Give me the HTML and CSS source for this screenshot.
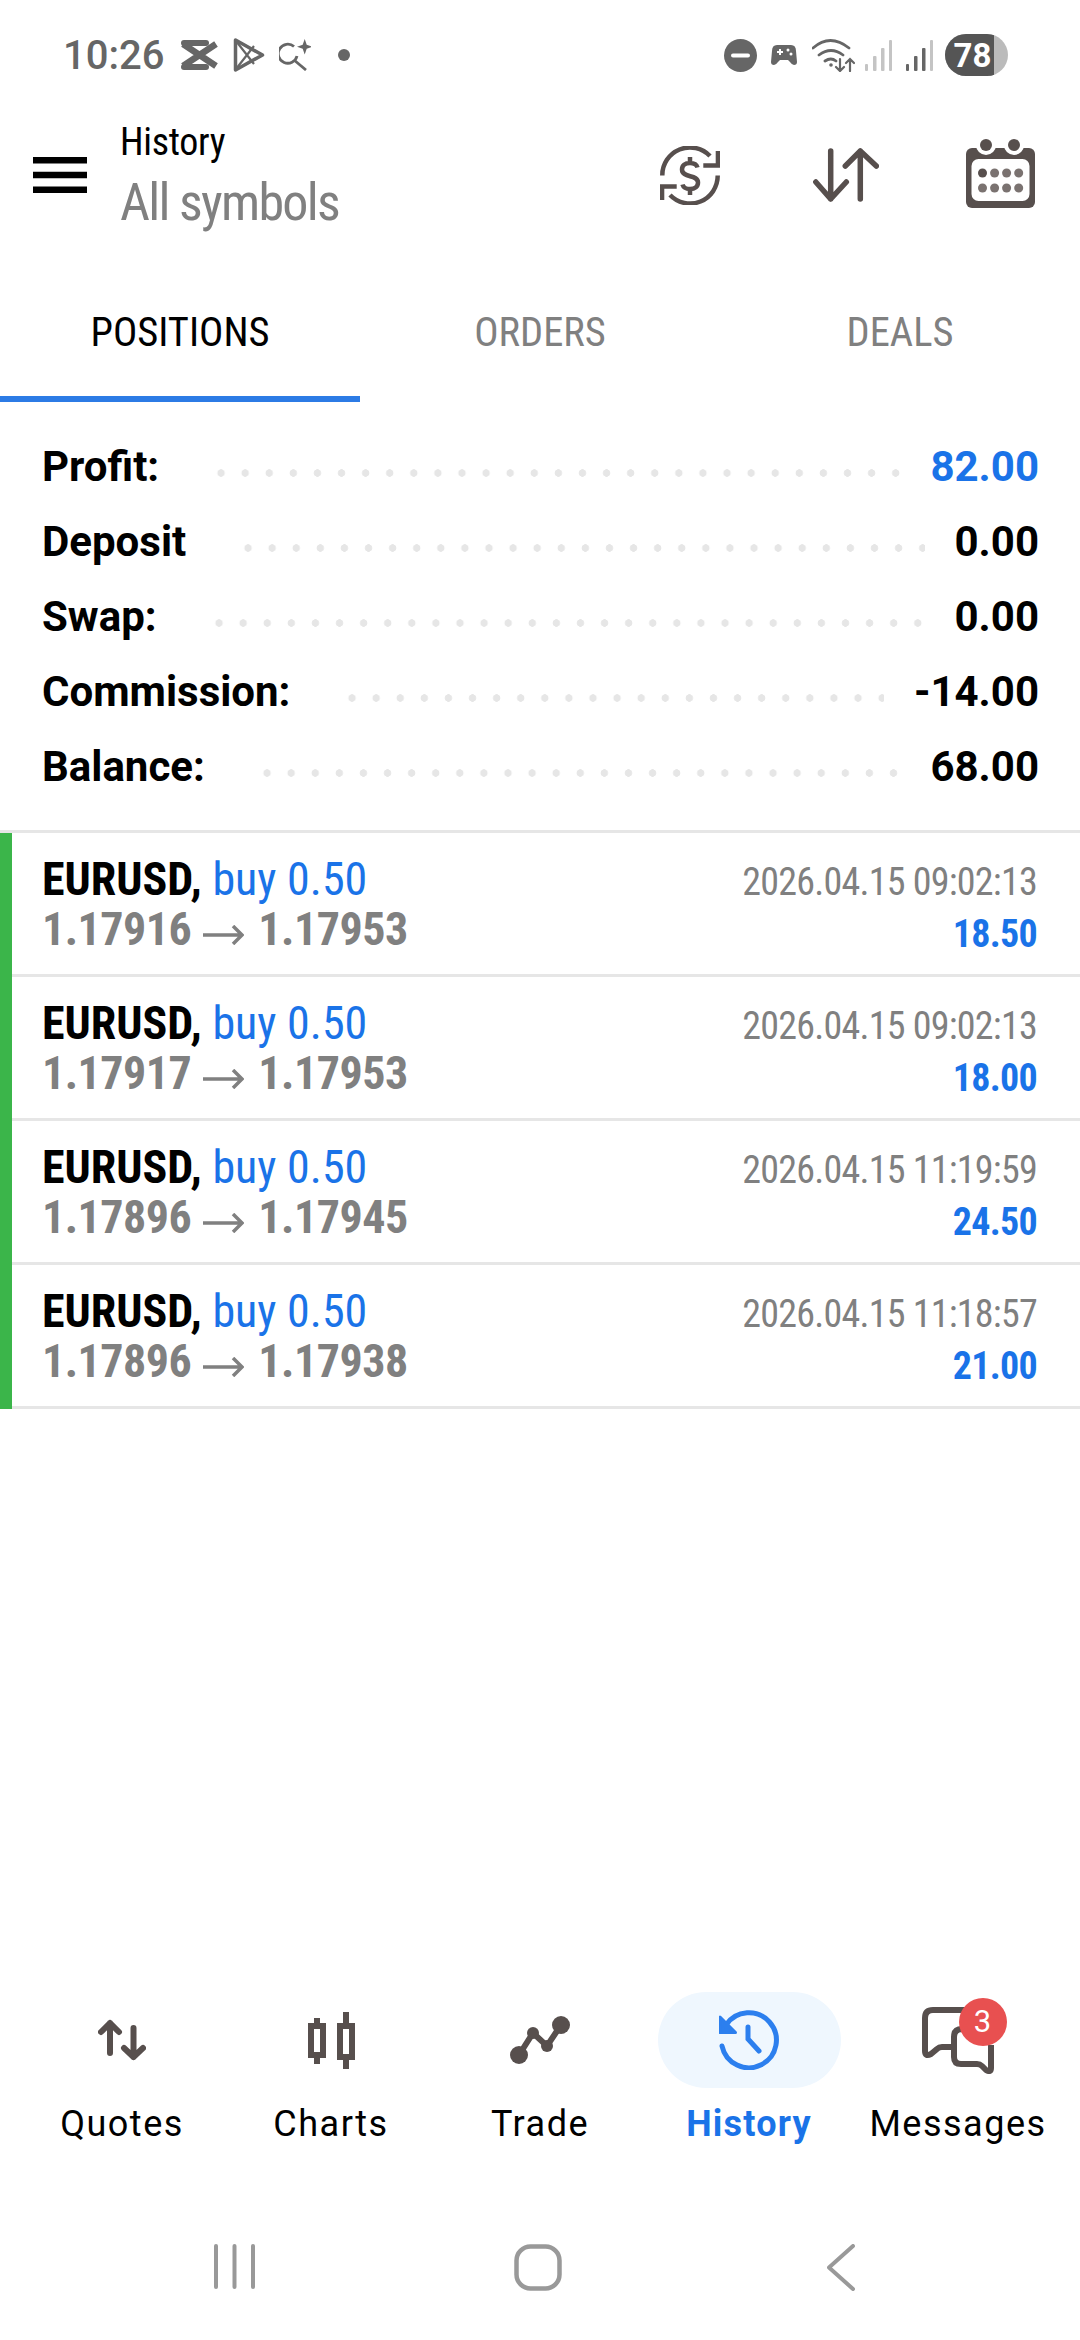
FILE: index.html
```html
<!DOCTYPE html>
<html lang="en">
<head>
    <meta charset="UTF-8">
    <meta name="viewport" content="width=device-width, initial-scale=1.0">
    <title>History</title>
    <link rel="stylesheet" href="styles.css">
</head>
<body>
    <div class="status">
        <span class="clock">10:26</span>
        <svg width="37" height="30" viewBox="0 0 37 30"><rect width="28" height="6" rx="3" fill="#666"/><rect y="24" width="28" height="6" rx="3" fill="#666"/><path d="M2 4L35 26M35 4L2 26" stroke="#666" stroke-width="6.5" fill="none"/></svg>
        <svg class="st-play" width="32" height="36" viewBox="0 0 32 36" fill="none" stroke="#666" stroke-width="3.5" stroke-linejoin="round"><path d="M2.5 3v30l27-15z"/><path d="M3 4l18 23M3 32L21 9" stroke-width="2.2"/></svg>
        <svg class="st-search" width="32" height="32" viewBox="0 0 32 32" fill="none" stroke="#666" stroke-width="2.8"><path d="M15 7.5A9.5 9.5 0 1 0 18 17"/><path d="M15 21l12 10"/><path d="M25.7 0l2 5.7 5.7 2-5.7 2-2 5.700-2-5.700-5.700-2 5.700-2z" fill="#666" stroke="none"/></svg>
        <span class="st-dot"></span>
        <span class="status-gap"></span>
        <svg width="33" height="33" viewBox="0 0 33 33"><circle cx="16.5" cy="16.5" r="16.5" fill="#666"/><rect x="7" y="14.5" width="19" height="4" rx="2" fill="#fff"/></svg>
        <svg class="st-pad" width="26" height="22" viewBox="0 0 26 22"><path d="M6 1h14q5 0 5 6l1 11q0 3-3 3-2 0-4-3l-2-2H9l-2 2q-2 3-4 3-3 0-3-3L1 7q0-6 5-6z" fill="#666"/><path d="M6 8h6M9 5v6" stroke="#fff" stroke-width="2"/><circle cx="17" cy="6" r="1.5" fill="#fff"/><circle cx="20" cy="10" r="1.5" fill="#fff"/></svg>
        <svg class="st-wifi" width="43" height="33" viewBox="0 0 43 33" fill="none" stroke="#666" stroke-width="2.8" stroke-linecap="round"><path d="M1 9q17-15 36 0M7 16q12-9 24 0M13 22q6-4 11 0"/><circle cx="19" cy="26" r="1.8" fill="#666" stroke="none"/><path d="M28 20v12M24 28l4 4 4-4M38 32V20M34 24l4-4 4 4" stroke-width="2.2"/></svg>
        <svg class="st-signal" width="27" height="31" viewBox="0 0 27 31" fill="#c4c4c4"><rect x="0" y="24" width="3" height="7" rx="1"/><rect x="8" y="16" width="3.5" height="15" rx="1"/><rect x="16" y="8" width="3.5" height="23" rx="1"/><rect x="24" y="0" width="3" height="31" rx="1"/></svg>
        <svg class="st-signal2" width="27" height="31" viewBox="0 0 27 31" fill="#666"><rect x="0" y="24" width="3" height="7" rx="1"/><rect x="8" y="16" width="3.5" height="15" rx="1"/><rect x="16" y="8" width="3.5" height="23" rx="1"/><rect x="24" y="0" width="3" height="31" rx="1" fill="#c4c4c4"/></svg>
        <span class="battery"><span class="battery-fill">78</span></span>
    </div>

    <header class="topbar">
        <svg class="menu" width="54" height="36" viewBox="0 0 54 36"><path d="M0 0h54v6.5H0zM0 14.75h54v6.5H0zM0 29.5h54V36H0z" fill="#000"/></svg>
        <div class="titles">
            <div class="title">History</div>
            <div class="subtitle">All symbols</div>
        </div>
        <div class="actions">
            <svg width="60" height="59" viewBox="0 0 60 59" fill="none" stroke="#574f4d" stroke-width="4.5"><path d="M2.3 29.5A27.7 27.7 0 0 1 50 10M57.7 29.5A27.7 27.7 0 0 1 10 49"/><path d="M60 5v16.7H43.3v-4.400h12.400V5zM0 54V38.300h16.700v4.400H4.300V54z" fill="#574f4d" stroke="none"/><path d="M37.5 21.5C36.5 18 33.5 17 30 17c-5 0-8 2.5-8 6.5 0 9 16 4.500 16 13 0 4-3 6.500-8 6.500-3.500 0-6.500-1-7.500-4.500M30 11v6M30 43v6"/></svg>
            <svg class="act-sort" width="66" height="54" viewBox="0 0 66 54" fill="none" stroke="#574f4d" stroke-width="5.5" stroke-linecap="round" stroke-linejoin="round"><path d="M17.7 3v48M2.800 34l14.900 17 15.600-17M47.300 51V3M32.300 18L47.300 3l16 15"/></svg>
            <svg class="act-cal" width="69" height="69" viewBox="0 0 69 69"><rect y="9" width="69" height="60" rx="6" fill="#574f4d"/><g fill="#fff"><circle cx="20" cy="6" r="10"/><circle cx="48" cy="6" r="10"/></g><g fill="#574f4d"><circle cx="20" cy="6" r="6"/><circle cx="48" cy="6" r="6"/></g><rect x="5.5" y="20" width="58" height="42" rx="7" fill="#fff"/><g fill="#7a7270"><circle cx="16.5" cy="34" r="4.5" fill="#574f4d"/><circle cx="28.6" cy="34" r="4.5"/><circle cx="40.6" cy="34" r="4.5"/><circle cx="52.7" cy="34" r="4.5"/><circle cx="16.5" cy="49" r="4.5"/><circle cx="28.6" cy="49" r="4.5"/><circle cx="40.6" cy="49" r="4.5"/><circle cx="52.7" cy="49" r="4.5"/></g></svg>
        </div>
    </header>

    <nav class="tabs">
        <div class="tab active">POSITIONS</div>
        <div class="tab">ORDERS</div>
        <div class="tab">DEALS</div>
    </nav>

    <section class="summary">
        <div class="sum-row"><span>Profit:</span><i class="dots"></i><span class="blue">82.00</span></div>
        <div class="sum-row"><span>Deposit</span><i class="dots"></i><span>0.00</span></div>
        <div class="sum-row"><span>Swap:</span><i class="dots"></i><span>0.00</span></div>
        <div class="sum-row"><span>Commission:</span><i class="dots"></i><span>-14.00</span></div>
        <div class="sum-row"><span>Balance:</span><i class="dots"></i><span>68.00</span></div>
    </section>

    <section class="deals">
        <div class="deal">
            <div class="deal-left">
                <div class="deal-name"><b>EURUSD,</b> <span class="blue">buy 0.50</span></div>
                <div class="deal-price">1.17916<svg class="arrow" width="41" height="20" viewBox="0 0 41 20" fill="none" stroke="#808080" stroke-width="3.5"><path d="M0 10h39M30 1l9 9-9 9"/></svg>1.17953</div>
            </div>
            <div class="deal-right">
                <div class="deal-time">2026.04.15 09:02:13</div>
                <div class="deal-profit blue">18.50</div>
            </div>
        </div>
        <div class="deal">
            <div class="deal-left">
                <div class="deal-name"><b>EURUSD,</b> <span class="blue">buy 0.50</span></div>
                <div class="deal-price">1.17917<svg class="arrow" width="41" height="20" viewBox="0 0 41 20" fill="none" stroke="#808080" stroke-width="3.5"><path d="M0 10h39M30 1l9 9-9 9"/></svg>1.17953</div>
            </div>
            <div class="deal-right">
                <div class="deal-time">2026.04.15 09:02:13</div>
                <div class="deal-profit blue">18.00</div>
            </div>
        </div>
        <div class="deal">
            <div class="deal-left">
                <div class="deal-name"><b>EURUSD,</b> <span class="blue">buy 0.50</span></div>
                <div class="deal-price">1.17896<svg class="arrow" width="41" height="20" viewBox="0 0 41 20" fill="none" stroke="#808080" stroke-width="3.5"><path d="M0 10h39M30 1l9 9-9 9"/></svg>1.17945</div>
            </div>
            <div class="deal-right">
                <div class="deal-time">2026.04.15 11:19:59</div>
                <div class="deal-profit blue">24.50</div>
            </div>
        </div>
        <div class="deal">
            <div class="deal-left">
                <div class="deal-name"><b>EURUSD,</b> <span class="blue">buy 0.50</span></div>
                <div class="deal-price">1.17896<svg class="arrow" width="41" height="20" viewBox="0 0 41 20" fill="none" stroke="#808080" stroke-width="3.5"><path d="M0 10h39M30 1l9 9-9 9"/></svg>1.17938</div>
            </div>
            <div class="deal-right">
                <div class="deal-time">2026.04.15 11:18:57</div>
                <div class="deal-profit blue">21.00</div>
            </div>
        </div>
    </section>

    <div class="spacer"></div>

    <footer class="bottom">
        <div class="nav-item">
            <div class="nav-icon">
                <svg width="48" height="42" viewBox="0 0 48 42" fill="none" stroke="#574f4d" stroke-width="6" stroke-linecap="round" stroke-linejoin="round"><path d="M12 34V4M3 13l9-9 9 9M35.5 9v29M26 29l9.5 9 9.5-9"/></svg>
            </div>
            <div class="nav-label">Quotes</div>
        </div>
        <div class="nav-item">
            <div class="nav-icon">
                <svg width="47" height="57" viewBox="0 0 47 57"><g fill="none" stroke="#574f4d" stroke-width="6"><rect x="3" y="14" width="12" height="29"/><rect x="32" y="14" width="12" height="31"/></g><path d="M6 6h6v6H6zM6 45h6v7H6zM35 0h6v12h-6zM35 47h6v10h-6z" fill="#574f4d"/></svg>
            </div>
            <div class="nav-label">Charts</div>
        </div>
        <div class="nav-item">
            <div class="nav-icon">
                <svg width="60" height="48" viewBox="0 0 60 48" fill="none" stroke="#574f4d" stroke-width="6"><path d="M9 39L23 17l14 13L51 9"/><g fill="#574f4d" stroke="none"><circle cx="9" cy="39" r="9"/><circle cx="23" cy="17" r="6"/><circle cx="37" cy="30" r="6"/><circle cx="51" cy="9" r="9"/></g></svg>
            </div>
            <div class="nav-label">Trade</div>
        </div>
        <div class="nav-item current">
            <div class="nav-icon pill">
                <svg width="60" height="60" viewBox="0 0 60 60" fill="none" stroke="#2c7fee" stroke-width="5" stroke-linecap="round"><path d="M7 15A27.5 27.5 0 1 1 3 36"/><path d="M29 17v12l11 12"/><path d="M1 7v15.5h15.5z" fill="#2c7fee" stroke-linejoin="round" stroke-width="3"/></svg>
            </div>
            <div class="nav-label">History</div>
        </div>
        <div class="nav-item">
            <div class="nav-icon">
                <svg width="72" height="67" viewBox="0 0 72 67" fill="none" stroke="#574f4d" stroke-width="6" stroke-linejoin="round"><path d="M48 3H11q-8 0-8 8v33q0 6 6 3l6-5q2-2 5-2h12"/><path d="M40 22q-8 0-8 8v20q0 7 7 7h16q3 0 5 2l4 4q5 3 5-2V38"/></svg>
                <span class="badge">3</span>
            </div>
            <div class="nav-label">Messages</div>
        </div>
    </footer>

    <div class="sysnav">
        <svg width="41" height="45" viewBox="0 0 41 45" fill="#999"><rect x="0" y="0" width="4" height="45" rx="2"/><rect x="18.5" y="0" width="4" height="45" rx="2"/><rect x="37" y="0" width="4" height="45" rx="2"/></svg>
        <svg class="sys-home" width="48" height="47" viewBox="0 0 48 47" fill="none" stroke="#999" stroke-width="4.5"><rect x="2.5" y="2.5" width="43" height="42" rx="14"/></svg>
        <svg width="28" height="47" viewBox="0 0 28 47" fill="none" stroke="#999" stroke-width="4" stroke-linecap="round" stroke-linejoin="round"><path d="M26 2L2 23.5 26 45"/></svg>
    </div>
</body>
</html>
```

FILE: styles.css
```css
html, body {
    margin: 0;
    padding: 0;
}

body {
    width: 1080px;
    height: 2340px;
    background-color: #fff;
    font-family: Roboto, "Liberation Sans", sans-serif;
    display: flex;
    flex-direction: column;
    overflow: hidden;
}

.blue {
    color: #1a73e8;
}

/* status bar */
.status {
    height: 110px;
    box-sizing: border-box;
    padding: 0 72px 0 63px;
    display: flex;
    align-items: center;
    color: #666;
}

.clock {
    font-size: 40px;
    font-weight: 500;
    width: 118px;
}

.st-play {
    margin-left: 15px;
}

.st-search {
    margin-left: 14px;
}

.st-dot {
    width: 12px;
    height: 12px;
    border-radius: 50%;
    background-color: #666;
    margin-left: 27px;
}

.status-gap {
    flex: 1;
}

.st-pad {
    margin-left: 14px;
}

.st-wifi {
    margin-left: 15px;
}

.st-signal {
    margin-left: 10px;
}

.st-signal2 {
    margin-left: 14px;
}

.battery {
    margin-left: 12px;
    width: 63px;
    height: 42px;
    border-radius: 21px;
    background-color: #bbb;
    overflow: hidden;
    display: block;
}

.battery-fill {
    display: flex;
    align-items: center;
    justify-content: center;
    width: 49px;
    height: 42px;
    box-sizing: border-box;
    padding-left: 6px;
    background-color: #555;
    color: #fff;
    font-size: 33px;
    font-weight: 700;
}

/* header */
.topbar {
    height: 130px;
    box-sizing: border-box;
    padding: 0 45px 0 33px;
    display: flex;
    align-items: center;
}

.menu {
    margin-right: 33px;
}

.titles {
    flex: 1;
}

.title {
    font-size: 38px;
    font-stretch: 75%;
    letter-spacing: -0.3px;
    line-height: 46px;
    color: #000;
}

.subtitle {
    font-size: 52px;
    font-stretch: 75%;
    letter-spacing: -1.7px;
    line-height: 58px;
    margin-top: 9px;
    color: #808080;
}

.actions {
    display: flex;
    align-items: center;
}

.act-sort {
    margin-left: 93px;
}

.act-cal {
    margin-left: 87px;
    margin-bottom: 3px;
}

/* tabs */
.tabs {
    height: 162px;
    display: flex;
}

.tab {
    flex: 1;
    box-sizing: border-box;
    height: 162px;
    padding-top: 70px;
    text-align: center;
    font-size: 40.5px;
    font-stretch: 75%;
    line-height: 44px;
    color: #808080;
}

.tab.active {
    color: #000;
    border-bottom: 6px solid #2c7be5;
}

/* summary */
.summary {
    padding: 27px 41px 0 42px;
    height: 431px;
    box-sizing: border-box;
    border-bottom: 3px solid #e6e6e6;
}

.sum-row {
    display: flex;
    align-items: center;
    height: 75px;
    font-size: 42px;
    font-weight: 700;
    color: #000;
}

.dots {
    flex: 1;
    height: 8px;
    margin: 12px 30px 0 50px;
    background-image: radial-gradient(circle, #e6e6e6 3.5px, transparent 4px);
    background-size: 24.1px 8px;
}

/* deals list */
.deals {
    border-left: 12px solid #3bb54a;
}

.deal {
    height: 141px;
    border-bottom: 3px solid #e6e6e6;
    padding: 0 43px 0 30px;
    display: flex;
    justify-content: space-between;
}

.deal-name {
    font-size: 46px;
    font-stretch: 75%;
    line-height: 50px;
    margin-top: 21px;
}

.deal-name b {
    color: #000;
}

.deal-price {
    font-size: 46px;
    font-stretch: 75%;
    font-weight: 700;
    letter-spacing: -0.5px;
    line-height: 50px;
    color: #808080;
}

.arrow {
    margin: 0 14px 0 12px;
}

.deal-right {
    text-align: right;
}

.deal-time {
    font-size: 38px;
    font-stretch: 75%;
    letter-spacing: -0.75px;
    line-height: 44px;
    margin-top: 27px;
    color: #808080;
}

.deal-profit {
    font-size: 38px;
    font-stretch: 75%;
    font-weight: 700;
    letter-spacing: -0.7px;
    line-height: 44px;
    margin-top: 8px;
}

.spacer {
    flex: 1;
}

/* bottom navigation */
.bottom {
    display: flex;
    justify-content: space-between;
    padding: 0 18px;
    height: 208px;
}

.nav-item {
    width: 208px;
    display: flex;
    flex-direction: column;
    align-items: center;
}

.nav-icon {
    position: relative;
    height: 96px;
    width: 183px;
    display: flex;
    align-items: center;
    justify-content: center;
    border-radius: 48px;
}

.nav-icon.pill {
    background-color: #eff7fe;
}

.nav-label {
    margin-top: 14px;
    font-size: 36px;
    letter-spacing: 1.5px;
    line-height: 44px;
    color: #000;
}

.current .nav-label {
    color: #1a73e8;
    font-weight: 700;
    letter-spacing: 1.2px;
}

.badge {
    position: absolute;
    right: 43px;
    top: 6px;
    width: 48px;
    height: 48px;
    border-radius: 50%;
    background-color: #e85050;
    color: #fff;
    font-size: 31px;
    line-height: 48px;
    text-align: center;
}

/* system navigation */
.sysnav {
    height: 140px;
    box-sizing: border-box;
    padding: 44px 225px 0 214px;
    display: flex;
    align-items: flex-start;
    justify-content: space-between;
}

.sys-home {
    margin-right: 6px;
}
```
